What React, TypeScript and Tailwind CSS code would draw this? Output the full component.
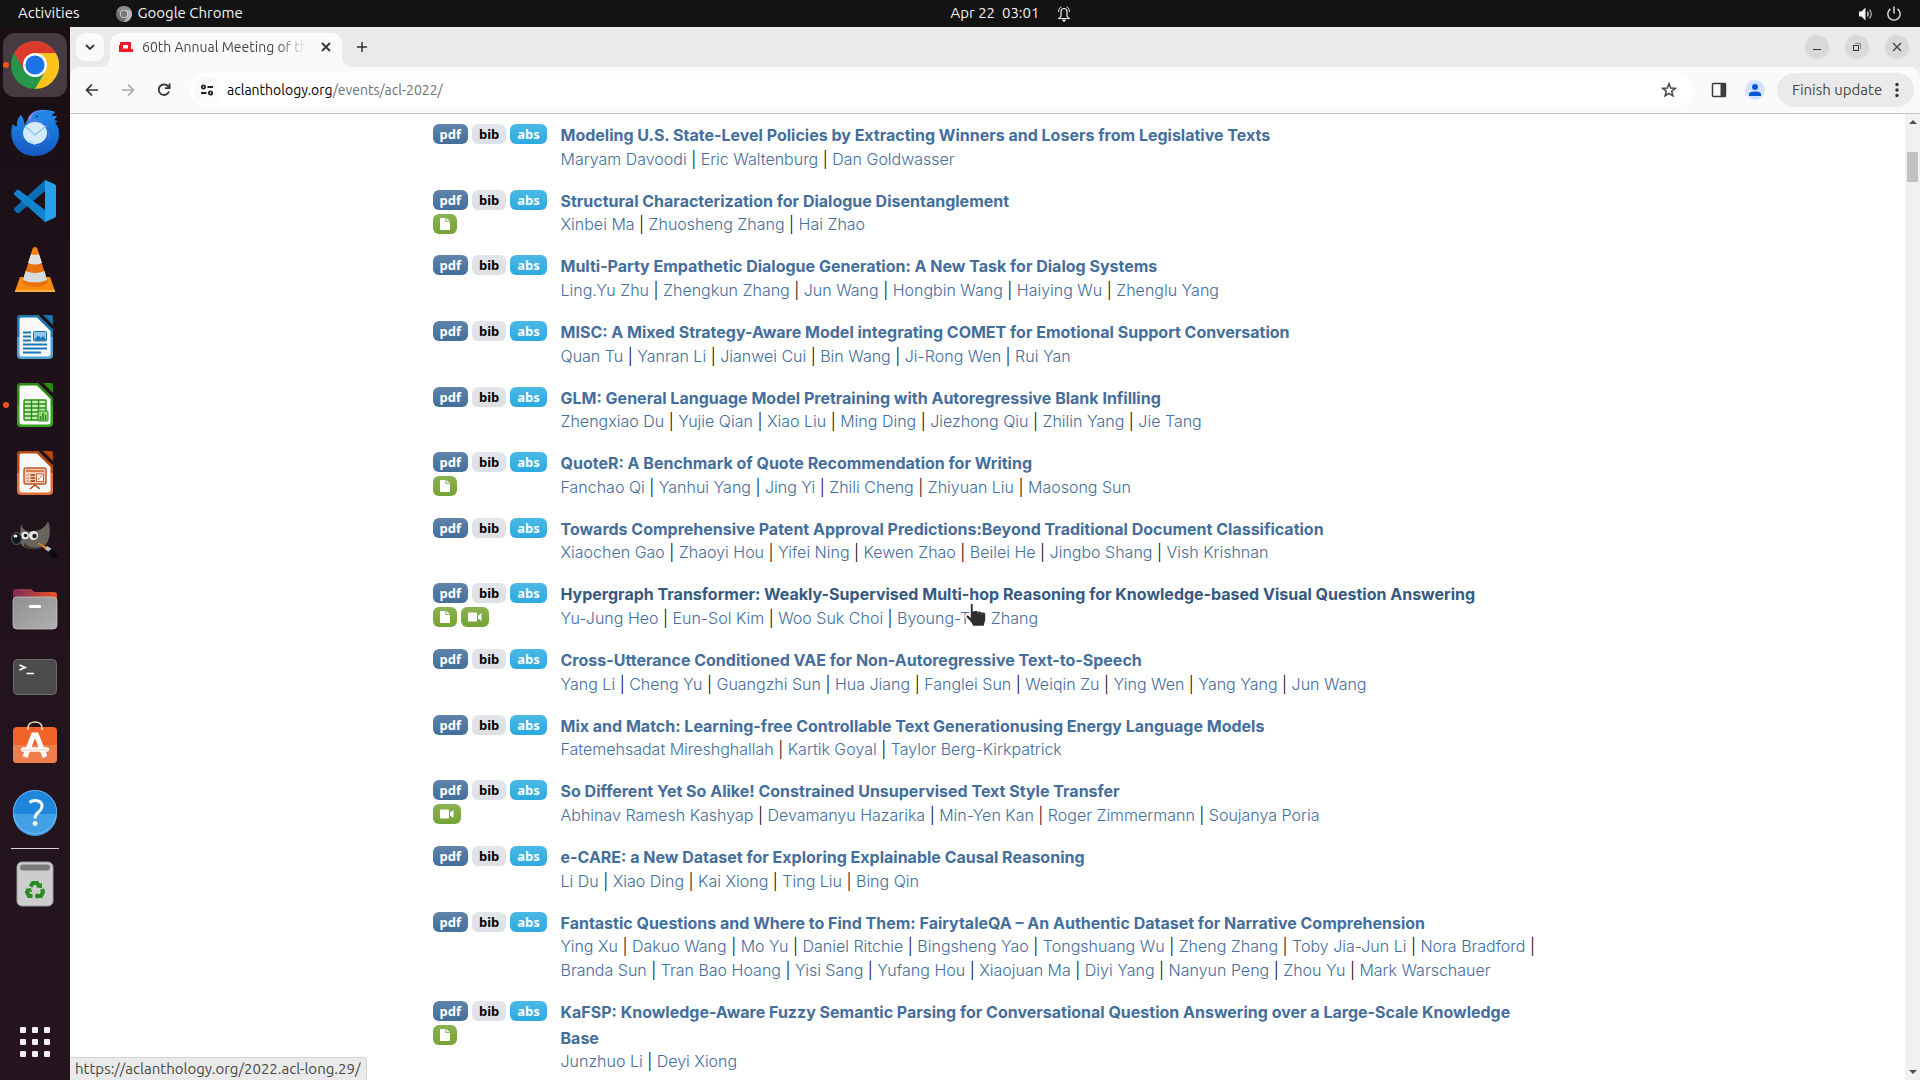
import { Fragment, type ReactNode } from "react";

type Paper = {
  title: string;
  authors: string[];
  extras?: ("file" | "video")[];
  hovered?: boolean;
};

const papers: Paper[] = [
  {
    title: "Modeling U.S. State-Level Policies by Extracting Winners and Losers from Legislative Texts",
    authors: ["Maryam Davoodi", "Eric Waltenburg", "Dan Goldwasser"],
  },
  {
    title: "Structural Characterization for Dialogue Disentanglement",
    authors: ["Xinbei Ma", "Zhuosheng Zhang", "Hai Zhao"],
    extras: ["file"],
  },
  {
    title: "Multi-Party Empathetic Dialogue Generation: A New Task for Dialog Systems",
    authors: ["Ling.Yu Zhu", "Zhengkun Zhang", "Jun Wang", "Hongbin Wang", "Haiying Wu", "Zhenglu Yang"],
  },
  {
    title: "MISC: A Mixed Strategy-Aware Model integrating COMET for Emotional Support Conversation",
    authors: ["Quan Tu", "Yanran Li", "Jianwei Cui", "Bin Wang", "Ji-Rong Wen", "Rui Yan"],
  },
  {
    title: "GLM: General Language Model Pretraining with Autoregressive Blank Infilling",
    authors: ["Zhengxiao Du", "Yujie Qian", "Xiao Liu", "Ming Ding", "Jiezhong Qiu", "Zhilin Yang", "Jie Tang"],
  },
  {
    title: "QuoteR: A Benchmark of Quote Recommendation for Writing",
    authors: ["Fanchao Qi", "Yanhui Yang", "Jing Yi", "Zhili Cheng", "Zhiyuan Liu", "Maosong Sun"],
    extras: ["file"],
  },
  {
    title: "Towards Comprehensive Patent Approval Predictions:Beyond Traditional Document Classification",
    authors: ["Xiaochen Gao", "Zhaoyi Hou", "Yifei Ning", "Kewen Zhao", "Beilei He", "Jingbo Shang", "Vish Krishnan"],
  },
  {
    title: "Hypergraph Transformer: Weakly-Supervised Multi-hop Reasoning for Knowledge-based Visual Question Answering",
    authors: ["Yu-Jung Heo", "Eun-Sol Kim", "Woo Suk Choi", "Byoung-Tak Zhang"],
    extras: ["file", "video"],
    hovered: true,
  },
  {
    title: "Cross-Utterance Conditioned VAE for Non-Autoregressive Text-to-Speech",
    authors: ["Yang Li", "Cheng Yu", "Guangzhi Sun", "Hua Jiang", "Fanglei Sun", "Weiqin Zu", "Ying Wen", "Yang Yang", "Jun Wang"],
  },
  {
    title: "Mix and Match: Learning-free Controllable Text Generationusing Energy Language Models",
    authors: ["Fatemehsadat Mireshghallah", "Kartik Goyal", "Taylor Berg-Kirkpatrick"],
  },
  {
    title: "So Different Yet So Alike! Constrained Unsupervised Text Style Transfer",
    authors: ["Abhinav Ramesh Kashyap", "Devamanyu Hazarika", "Min-Yen Kan", "Roger Zimmermann", "Soujanya Poria"],
    extras: ["video"],
  },
  {
    title: "e-CARE: a New Dataset for Exploring Explainable Causal Reasoning",
    authors: ["Li Du", "Xiao Ding", "Kai Xiong", "Ting Liu", "Bing Qin"],
  },
  {
    title: "Fantastic Questions and Where to Find Them: FairytaleQA – An Authentic Dataset for Narrative Comprehension",
    authors: [
      "Ying Xu", "Dakuo Wang", "Mo Yu", "Daniel Ritchie", "Bingsheng Yao", "Tongshuang Wu", "Zheng Zhang",
      "Toby Jia-Jun Li", "Nora Bradford", "Branda Sun", "Tran Bao Hoang", "Yisi Sang", "Yufang Hou",
      "Xiaojuan Ma", "Diyi Yang", "Nanyun Peng", "Zhou Yu", "Mark Warschauer",
    ],
  },
  {
    title: "KaFSP: Knowledge-Aware Fuzzy Semantic Parsing for Conversational Question Answering over a Large-Scale Knowledge Base",
    authors: ["Junzhuo Li", "Deyi Xiong"],
    extras: ["file"],
  },
];

function ChromeLogo({ mono = false, className }: { mono?: boolean; className: string }) {
  const c = mono
    ? ["#8a8a8a", "#b5b5b5", "#6f6f6f", "#d8d8d8", "#777777"]
    : ["#dd3a2e", "#fcc31e", "#27964a", "#ffffff", "#1a73e8"];
  return (
    <svg viewBox="0 0 48 48" className={className} aria-hidden="true">
      <circle cx="24" cy="24" r="24" fill={c[2]} />
      <path d="M24 24 L3.2 12 A24 24 0 0 1 44.8 12 Z" fill={c[0]} />
      <path d="M24 12 H44.8 A24 24 0 0 1 24 48 L34.4 30 Z" fill={c[1]} />
      <path d="M3.2 12 L13.6 30 L24 24 L24 12 Z" fill={c[0]} />
      <circle cx="24" cy="24" r="12" fill={c[3]} />
      <circle cx="24" cy="24" r="9.6" fill={c[4]} />
    </svg>
  );
}

function DocIcon({ dark, light, children }: { dark: string; light: string; children: ReactNode }) {
  return (
    <svg viewBox="0 0 48 48" className="size-12" aria-hidden="true">
      <path d="M10 2 H27 L42 17 V42 Q42 46 38 46 H10 Q6 46 6 42 V6 Q6 2 10 2 Z" fill={light} />
      <path d="M10 2 H27 L42 17 V24 H6 V6 Q6 2 10 2 Z" fill={dark} />
      <path d="M10 4.5 H26 L39.5 18 V41 Q39.5 43.5 37 43.5 H11 Q8.5 43.5 8.5 41 V6 Q8.5 4.5 10 4.5 Z" fill="#fafafa" />
      <path d="M32 2 H40 Q42 2 42 4 V12 Z" fill={dark} />
      {children}
    </svg>
  );
}

const dock: { name: string; icon: ReactNode; running?: boolean; active?: boolean }[] = [
  { name: "Google Chrome", running: true, active: true, icon: <ChromeLogo className="size-12" /> },
  {
    name: "Thunderbird",
    icon: (
      <svg viewBox="0 0 48 48" className="size-12" aria-hidden="true">
        <defs>
          <linearGradient id="bird" x1="0" y1="0" x2="0" y2="1">
            <stop offset="0" stopColor="#1f8ef0" />
            <stop offset="1" stopColor="#1558c0" />
          </linearGradient>
        </defs>
        <path d="M10 6 C6 9 6 14 6 17 C4 18 3 16 2 15 C-1 22 0 32 5 38 C10 45 17 47 24 47 C37 47 48 38 48 25 C48 20 47 17 44 14 L47 12 L43 11 L46 7 L40 7 L44 3 C36 0 26 0 21 4 C19 6 17 9 16 12 C14 15 12 18 12 21 C15 16 13 10 10 6 Z" fill="url(#bird)" />
        <path d="M17 9 C21 1 32 0 44 3 C34 2 26 4 23 9 C21 13 17 11 17 9Z" fill="#8e83e6" />
        <path d="M22 5 C28 1 36 1 44 3 L40 7 L46 7 L43 11 C36 12 30 12 24 14 C20 12 20 8 22 5Z" fill="#1f86e6" />
        <path d="M15 13 C19 9 25 9 28 12 C33 14 38 19 38 26 C38 32 32 36 27 37 C33 36 37 33 37 27 L36 16Z" fill="#4f7fe2" />
        <ellipse cx="24" cy="24" rx="12" ry="11" fill="#d4ebfd" />
        <path d="M14 17 L24 26 L35 17" fill="none" stroke="#8dc0ee" strokeWidth="1.2" />
        <path d="M17 31 C20 35 25 37 29 37 C24 37 22 34 22 32Z" fill="#b9dcfb" />
        <circle cx="26" cy="7.5" r="1" fill="#0c2e7a" />
      </svg>
    ),
  },
  {
    name: "Visual Studio Code",
    icon: (
      <svg viewBox="0 0 48 48" className="size-12" aria-hidden="true">
        <path d="M34 3 L45 8 V11 L34 14 L8 36 Q7 36.5 6 36 L3 33 Q2.5 32 3.5 31 Z" fill="#0a6cb4" />
        <path d="M34 45 L45 40 V36 L34 33 L8 13 Q7 12.5 6 13 L3 16 Q2.5 17 3.5 18 Z" fill="#1184cd" />
        <path d="M34 3 L43 7 Q45 8 45 10 V38 Q45 40 43 41 L34 45 Z" fill="#27a0ee" />
      </svg>
    ),
  },
  {
    name: "VLC media player",
    icon: (
      <svg viewBox="0 0 48 48" className="size-12" aria-hidden="true">
        <path d="M9 32 H39 L44 46 Q44 47 43 47 H5 Q4 47 4 46 Z" fill="#f78b12" />
        <path d="M4 45 H44 V46 Q44 47 43 47 H5 Q4 47 4 46 Z" fill="#ffb044" />
        <path d="M22 3 Q24 1.5 26 3 L37 38 Q24 46 11 38 Z" fill="#e87109" />
        <path d="M20 9 H28 L31 18 Q24 21 17 18 Z" fill="#dfe3e4" />
        <path d="M14.5 26 Q24 30 33.5 26 L36 35 Q24 40 12 35 Z" fill="#d5dadb" />
        <path d="M22 3 Q24 1.5 26 3 L28 9 Q24 11 20 9 Z" fill="#f28416" />
      </svg>
    ),
  },
  {
    name: "LibreOffice Writer",
    icon: (
      <DocIcon dark="#1b74ae" light="#4ba3d4">
        <path d="M12 19.5 H20 M12 23.5 H20 M12 27.5 H20 M12 31.5 H36 M12 35.5 H36 M12 39.5 H30" stroke="#1279bd" strokeWidth="2" />
        <rect x="22.5" y="18.5" width="13" height="9.5" rx="1" fill="#8fc6e8" stroke="#1b74ae" />
        <path d="M23 27.5 L27 22.5 L30 25 L32.5 23 L35.5 27.5Z" fill="#1b74ae" />
      </DocIcon>
    ),
  },
  {
    name: "LibreOffice Calc",
    running: true,
    icon: (
      <DocIcon dark="#2b8a13" light="#35a61c">
        <rect x="13" y="19" width="22" height="20" rx="1" fill="#c5efb8" stroke="#2b8a13" strokeWidth="1.4" />
        <path d="M13 23 H35 M13 27 H35 M13 31 H35 M13 35 H35 M20.5 19 V39 M27.5 19 V39" stroke="#2b8a13" strokeWidth="1.4" />
        <rect x="27" y="30" width="10" height="10" rx="1" fill="#8fdc78" stroke="#2b8a13" />
        <path d="M29.5 39 V35 M32 39 V32 M34.5 39 V34" stroke="#2b8a13" strokeWidth="1.5" />
      </DocIcon>
    ),
  },
  {
    name: "LibreOffice Impress",
    icon: (
      <DocIcon dark="#b5480c" light="#e0703a">
        <rect x="13" y="19" width="22" height="16" rx="2" fill="#f6cdb5" stroke="#b5562a" strokeWidth="1.4" />
        <path d="M15 22 H33" stroke="#d2622c" strokeWidth="1.6" />
        <path d="M15.5 26 H18 M15.5 29 H18 M15.5 32 H18" stroke="#e79b74" strokeWidth="1.4" />
        <path d="M19.5 26 H24 M19.5 29 H24 M19.5 32 H24" stroke="#8f3a10" strokeWidth="1.4" />
        <rect x="25.5" y="25" width="7" height="7.5" fill="#fff" stroke="#d2622c" />
        <path d="M27 31 L29 28.5 L31.5 26.5" fill="none" stroke="#d2622c" />
        <path d="M24 35 V37 M24 36 L19 40 M24 36 L29 40" stroke="#b5480c" strokeWidth="1.6" />
      </DocIcon>
    ),
  },
  {
    name: "GIMP",
    icon: (
      <svg viewBox="0 0 48 48" className="size-12" aria-hidden="true">
        <path d="M10 7 C12 14 18 16 23 14 C29 14 35 10 37 4 C40 11 39 21 36 26 C31 33 20 33 13 30 C9 28 7 22 9 16 Z" fill="#6a655c" />
        <path d="M13 26 C20 32 30 32 36 26 C32 33 20 33 13 30Z" fill="#3e3a34" />
        <circle cx="14" cy="18.5" r="3.8" fill="#e8e8e8" />
        <circle cx="22.5" cy="18.5" r="4.5" fill="#e8e8e8" />
        <circle cx="14.5" cy="18.5" r="1.8" fill="#1c1c1c" />
        <circle cx="23.5" cy="19" r="2.2" fill="#1c1c1c" />
        <ellipse cx="5.5" cy="21.5" rx="5" ry="6" fill="#10181b" stroke="#58656a" />
        <ellipse cx="4.5" cy="19" rx="2" ry="1.5" fill="#f2f2f2" />
        <path d="M27 26 L37 31 L36 33 Z" fill="#f39a2f" stroke="#d97e14" />
        <path d="M36 29 L41 32 L39 36 L34 32Z" fill="#b9bec0" />
        <path d="M40 32 C45 34 46 38 47 42 C42 41 38 39 37 35Z" fill="#0b0b0b" />
      </svg>
    ),
  },
  {
    name: "Files",
    icon: (
      <svg viewBox="0 0 48 48" className="size-12" aria-hidden="true">
        <defs>
          <linearGradient id="folder" x1="0" y1="0" x2="1" y2="0">
            <stop offset="0" stopColor="#7d2a5c" />
            <stop offset="1" stopColor="#e95420" />
          </linearGradient>
          <linearGradient id="front" x1="0" y1="0" x2="1" y2="1">
            <stop offset="0" stopColor="#8f8f8f" />
            <stop offset="1" stopColor="#b0b0b0" />
          </linearGradient>
        </defs>
        <path d="M5 4 H19 Q21 4 22 6 Q23 7 25 7 H43 Q46 7 46 10 V24 H2 V7 Q2 4 5 4Z" fill="url(#folder)" />
        <rect x="2" y="12" width="44" height="32" rx="4" fill="url(#front)" stroke="#c4c4c4" strokeWidth="0.8" />
        <rect x="18" y="20" width="12" height="3" rx="1" fill="#fff" />
      </svg>
    ),
  },
  {
    name: "Terminal",
    icon: (
      <svg viewBox="0 0 48 48" className="size-12" aria-hidden="true">
        <rect x="2.5" y="6.5" width="43" height="35" rx="4" fill="#4b4b4b" stroke="#6d6d6d" />
        <path d="M8.5 12 L14 14.5 L8.5 17" fill="none" stroke="#fff" strokeWidth="1.8" />
        <path d="M15.5 20.5 H23" stroke="#fff" strokeWidth="1.6" />
      </svg>
    ),
  },
  {
    name: "Ubuntu Software",
    icon: (
      <svg viewBox="0 0 48 48" className="size-12" aria-hidden="true">
        <rect x="2" y="6" width="44" height="36" rx="4" fill="#f0642a" />
        <path d="M2 24 H46 V38 Q46 42 42 42 H6 Q2 42 2 38Z" fill="#f07e4d" />
        <path d="M17 9 V7 C17 -1 31 -1 31 7 V9" fill="none" stroke="#f3ddb4" strokeWidth="1.6" />
        <path d="M14 36 L22.5 14 H25.5 L34 36" fill="none" stroke="#fff" strokeWidth="5" />
        <path d="M12 28.5 H36" stroke="#fff" strokeWidth="4.5" strokeLinecap="round" />
        <path d="M12 29 H36" stroke="#f9c3aa" strokeWidth="1" strokeLinecap="round" />
      </svg>
    ),
  },
  {
    name: "Help",
    icon: (
      <svg viewBox="0 0 48 48" className="size-12" aria-hidden="true">
        <circle cx="24" cy="23" r="22" fill="#1e86dc" />
        <path d="M2 25 H46 A22 22 0 0 1 2 25Z" fill="#43a0e6" />
        <circle cx="24" cy="23" r="21.6" fill="none" stroke="#7cc0f2" strokeWidth="0.8" />
        <path d="M18.5 13.5 C22 10.5 31.5 10.5 31 17.5 C30.5 23 24 23 24 29.5" fill="none" stroke="#fff" strokeWidth="3" />
        <circle cx="24" cy="34.5" r="2.4" fill="#fff" />
      </svg>
    ),
  },
];

function Dock() {
  return (
    <nav aria-label="Dock" className="flex w-[70px] shrink-0 flex-col items-center bg-linear-to-b from-[#1b0f16] to-[#26151f] pt-[6px]">
      <ul className="flex flex-col gap-1">
        {dock.map((d) => (
          <li key={d.name} className="relative">
            <button
              aria-label={d.name}
              className={`flex size-16 items-center justify-center rounded-xl ${d.active ? "bg-[#453b41]" : ""}`}
            >
              {d.icon}
            </button>
            {d.running && <span className="absolute top-[29px] left-0 size-[6px] rounded-full bg-[#e95420]" />}
          </li>
        ))}
      </ul>
      <hr className="my-[3px] w-12 border-[#d6d3d5]" />
      <button aria-label="Trash" className="flex size-16 items-center justify-center">
        <svg viewBox="0 0 48 48" className="size-12" aria-hidden="true">
          <rect x="6" y="2" width="36" height="44" rx="5" fill="#cdcdcd" stroke="#9d9d9d" />
          <rect x="9" y="4.5" width="30" height="6" rx="2.5" fill="#7b7b7b" />
          <g fill="none" stroke="#268c1f" strokeWidth="4">
            <path d="M19.5 26.5 L22 23 H26 L28 26" />
            <path d="M31 29 L32 32 L30 36 H26" />
            <path d="M21.5 36 H18 L16 32 L17.5 29.5" />
          </g>
          <path d="M25 27.5 L31 28 L31 22.5Z M26.5 32.5 L23.5 36 L26.5 39.5Z M14 29 L20 28 L21 32.5Z" fill="#268c1f" />
        </svg>
      </button>
      <button aria-label="Show Applications" className="mt-auto mb-[23px] grid grid-cols-3 gap-[6px]">
        {Array.from({ length: 9 }, (_, i) => (
          <span key={i} className="size-[6px] rounded-[1px] bg-[#f2f0f1]" />
        ))}
      </button>
    </nav>
  );
}

function TopBar() {
  return (
    <header className="flex h-[27px] shrink-0 items-center bg-[#131313] text-[15px] text-[#f2f2f2]">
      <div className="flex flex-1 items-center pl-[18px]">
        <button>Activities</button>
        <button className="ml-9 flex items-center gap-[6px]">
          <ChromeLogo mono className="size-4" />
          Google Chrome
        </button>
      </div>
      <button className="flex items-center gap-[18px] pl-[102px] whitespace-pre">
        Apr 22  03:01
        <svg viewBox="0 0 14 16" className="h-4 w-[14px]" fill="none" stroke="#f2f2f2" aria-hidden="true">
          <path d="M1 12.5 H13 M2.5 12 L4 10 V5.5 C4 1.5 10 1.5 10 5.5 V10 L11.5 12" strokeWidth="1.2" />
          <path d="M1.5 6 C1.5 3.5 2.5 1.5 4.5 0.8 M12.5 6 C12.5 3.5 11.5 1.5 9.5 0.8" />
          <path d="M5.5 14 H8.5 L7 15.5Z" fill="#f2f2f2" />
        </svg>
      </button>
      <div className="flex flex-1 items-center justify-end gap-3 pr-[18px]">
        <button aria-label="Volume">
          <svg viewBox="0 0 16 16" className="size-4" fill="none" stroke="#f2f2f2" aria-hidden="true">
            <path d="M1 5.5 H3.5 L7.5 1.5 V14.5 L3.5 10.5 H1Z" fill="#f2f2f2" stroke="none" />
            <path d="M9.5 5.5 Q11 8 9.5 10.5" strokeWidth="1.3" />
            <path d="M11.5 3.5 Q15 8 11.5 12.5" stroke="#aaa" strokeWidth="1.3" />
          </svg>
        </button>
        <button aria-label="Power">
          <svg viewBox="0 0 16 16" className="size-4" fill="none" stroke="#e4e4e4" strokeWidth="1.4" aria-hidden="true">
            <path d="M4.5 2.8 A6.2 6.2 0 1 0 11.5 2.8 M8 0.5 V7.5" />
          </svg>
        </button>
      </div>
    </header>
  );
}

function TabStrip() {
  return (
    <div className="flex h-10 items-center bg-[#eaeaea] pr-[11px] pl-[6px]">
      <button aria-label="Search tabs" className="flex size-7 items-center justify-center rounded-[9px] bg-[#fafafa]">
        <svg viewBox="0 0 10 6" className="h-[6px] w-[10px]" fill="none" stroke="#333" strokeWidth="1.8" aria-hidden="true">
          <path d="M1 1 L5 5 L9 1" />
        </svg>
      </button>
      <div className="relative ml-[6px] flex h-[34px] w-[232px] items-center self-end rounded-t-[10px] bg-[#fafafa] pl-[9px] before:absolute before:bottom-0 before:-left-[10px] before:size-[10px] before:bg-[radial-gradient(circle_at_0_0,transparent_10px,#fafafa_10px)] after:absolute after:-right-[10px] after:bottom-0 after:size-[10px] after:bg-[radial-gradient(circle_at_100%_0,transparent_10px,#fafafa_10px)]">
        <svg viewBox="0 0 14 10" className="mb-[6px] h-[10px] w-[14px]" aria-hidden="true">
          <path d="M1 0 H12 V7 H14 V10 H0 V3 H1Z M4 3 V6.5 H9 V3Z" fill="#ed1c24" fillRule="evenodd" />
        </svg>
        <span className="mb-[6px] ml-[9px] w-[168px] overflow-hidden bg-linear-to-r from-[#3c4043] from-80% to-transparent to-98% bg-clip-text text-[14px] whitespace-nowrap text-transparent">
          60th Annual Meeting of the
        </span>
        <button aria-label="Close tab" className="mb-[6px] ml-[11px]">
          <svg viewBox="0 0 10 10" className="size-[10px]" stroke="#333" strokeWidth="1.8" aria-hidden="true">
            <path d="M1 1 L9 9 M9 1 L1 9" />
          </svg>
        </button>
      </div>
      <button aria-label="New tab" className="ml-[15px]">
        <svg viewBox="0 0 10 10" className="size-[10px]" stroke="#333" strokeWidth="1.5" aria-hidden="true">
          <path d="M5 0 V10 M0 5 H10" />
        </svg>
      </button>
      <div className="ml-auto flex gap-4">
        <button aria-label="Minimize" className="flex size-6 items-center justify-center rounded-full bg-[#d9d9d9]">
          <svg viewBox="0 0 10 10" className="size-[10px]" aria-hidden="true">
            <path d="M1 7.5 H9" stroke="#333" />
          </svg>
        </button>
        <button aria-label="Restore" className="flex size-6 items-center justify-center rounded-full bg-[#d9d9d9]">
          <svg viewBox="0 0 10 10" className="size-[10px]" fill="none" aria-hidden="true">
            <path d="M3 1.5 H8.5 V7" stroke="#888" />
            <rect x="1.5" y="3.5" width="5" height="5" stroke="#333" />
          </svg>
        </button>
        <button aria-label="Close" className="flex size-6 items-center justify-center rounded-full bg-[#d9d9d9]">
          <svg viewBox="0 0 10 10" className="size-[10px]" stroke="#444" strokeWidth="1.4" aria-hidden="true">
            <path d="M1 1 L9 9 M9 1 L1 9" />
          </svg>
        </button>
      </div>
    </div>
  );
}

function Toolbar() {
  return (
    <div className="bg-[#eaeaea]">
      <div className="flex h-[47px] items-center rounded-t-[10px] border-b border-[#c4c4c4] bg-[#fafafa] pr-[6px] pl-1">
        <button aria-label="Back" className="flex size-9 items-center justify-center">
          <svg viewBox="0 0 14 14" className="size-[14px]" fill="none" stroke="#333" strokeWidth="1.7" aria-hidden="true">
            <path d="M13 7 H2 M7 1.5 L1.5 7 L7 12.5" />
          </svg>
        </button>
        <button aria-label="Forward" className="flex size-9 items-center justify-center">
          <svg viewBox="0 0 14 14" className="size-[14px]" fill="none" stroke="#aaa" strokeWidth="1.7" aria-hidden="true">
            <path d="M1 7 H12 M7 1.5 L12.5 7 L7 12.5" />
          </svg>
        </button>
        <button aria-label="Reload" className="flex size-9 items-center justify-center">
          <svg viewBox="0 0 14 14" className="size-[14px]" fill="none" stroke="#333" strokeWidth="1.8" aria-hidden="true">
            <path d="M12 8.5 A5.3 5.3 0 1 1 11 3.2 L12.5 5" />
            <path d="M12.6 0.5 V5.2 H8" />
          </svg>
        </button>
        <div className="ml-2 flex h-[34px] flex-1 items-center rounded-full bg-white pr-4 pl-[3px]">
          <button aria-label="View site information" className="flex size-7 items-center justify-center rounded-full bg-[#fafafa]">
            <svg viewBox="0 0 14 12" className="h-3 w-[14px]" fill="none" stroke="#222" strokeWidth="1.8" aria-hidden="true">
              <circle cx="3.5" cy="3" r="1.7" />
              <path d="M7.5 3 H13 M1 9 H6.5" />
              <circle cx="10.5" cy="9" r="1.7" />
            </svg>
          </button>
          <a href="#address" className="ml-[6px] flex-1 text-[14px] text-[#6f6f6f]">
            <span className="text-black">aclanthology.org</span>/events/acl-2022/
          </a>
          <button aria-label="Bookmark this tab">
            <svg viewBox="0 0 16 16" className="size-4" fill="none" stroke="#444" strokeWidth="1.5" aria-hidden="true">
              <path d="M8 1.7 L9.7 6 L14.3 6.3 L10.7 9.2 L11.9 13.8 L8 11.3 L4.1 13.8 L5.3 9.2 L1.7 6.3 L6.3 6Z" />
            </svg>
          </button>
        </div>
        <button aria-label="Side panel" className="ml-2 flex size-9 items-center justify-center">
          <svg viewBox="0 0 16 16" className="size-4" aria-hidden="true">
            <rect x="1.5" y="1.5" width="13" height="13" rx="1" fill="none" stroke="#3c3c3c" strokeWidth="1.5" />
            <path d="M9.5 1 H15 V15 H9.5Z" fill="#3c3c3c" />
          </svg>
        </button>
        <button aria-label="Profile" className="flex size-9 items-center justify-center">
          <svg viewBox="0 0 20 20" className="size-5" aria-hidden="true">
            <circle cx="10" cy="10" r="10" fill="#d3e3fd" />
            <circle cx="10" cy="7" r="3" fill="#0b57d0" />
            <path d="M4 16 V14 C4 10.7 16 10.7 16 14 V16Z" fill="#0b57d0" />
          </svg>
        </button>
        <button className="ml-1 flex h-[34px] w-[137px] items-center rounded-full bg-[#eaeaea] pl-[15px] text-[15px] text-[#474747]">
          Finish update
          <svg viewBox="0 0 4 16" className="mr-[15px] ml-auto h-4 w-1" fill="#333" aria-hidden="true">
            <circle cx="2" cy="2.5" r="1.7" />
            <circle cx="2" cy="8" r="1.7" />
            <circle cx="2" cy="13.5" r="1.7" />
          </svg>
        </button>
      </div>
    </div>
  );
}

function PaperRow({ paper }: { paper: Paper }) {
  return (
    <p className="mb-4 flex">
      <span className="mr-2 block min-w-[120px] shrink-0 pt-[3px] font-['Noto_Sans',sans-serif] text-[13px] font-bold whitespace-nowrap">
        <span className="flex h-6 items-start gap-1">
          <a href="#pdf" className="rounded-[6px] bg-linear-to-b from-[#6084aa] to-[#446e9b] px-[7px] leading-5 text-white">pdf</a>
          <a href="#bib" className="rounded-[6px] bg-linear-to-b from-[#e2e5e9] to-[#dde1e6] px-[7px] leading-5 text-black">bib</a>
          <a href="#abs" className="rounded-[6px] bg-linear-to-b from-[#4bb9e4] to-[#2ca9df] px-[7px] leading-5 text-white">abs</a>
        </span>
        {paper.extras && (
          <span className="flex h-5 items-start gap-1">
            {paper.extras.map((kind) => (
              <a
                key={kind}
                href={`#${kind}`}
                aria-label={kind}
                className="flex h-5 items-center rounded-[6px] bg-linear-to-b from-[#8bb352] to-[#75a333] px-[7px]"
              >
                {kind === "file" ? (
                  <svg viewBox="0 0 10 14" className="h-[14px] w-[10px]" aria-hidden="true">
                    <path d="M0 1 H5.5 V5 H10 V13 H0Z M6.5 1 L10 4.2 H6.5Z" fill="#fff" />
                  </svg>
                ) : (
                  <svg viewBox="0 0 14 12" className="h-3 w-[14px]" aria-hidden="true">
                    <path d="M1 1.5 H8 Q9 1.5 9 2.5 V9.5 Q9 10.5 8 10.5 H1 Q0 10.5 0 9.5 V2.5 Q0 1.5 1 1.5Z M10 4.5 L13.5 2 V10 L10 7.5Z" fill="#fff" />
                  </svg>
                )}
              </a>
            ))}
          </span>
        )}
      </span>
      <span className="block font-[350]">
        <strong className="font-[650]">
          <a href="#paper" className={`align-middle ${paper.hovered ? "text-[#36597f]" : "text-[#446e9b]"}`}>
            {paper.title}
          </a>
        </strong>
        <br />
        {paper.authors.map((a, i) => (
          <Fragment key={a}>
            {i > 0 && "\u00a0| "}
            <a href="#author" className="text-[#446e9b]">{a}</a>
          </Fragment>
        ))}
      </span>
    </p>
  );
}

export default function App() {
  return (
    <div className="relative flex h-screen flex-col overflow-hidden bg-white font-[Ubuntu,'Noto_Sans',sans-serif]">
      <TopBar />
      <div className="flex min-h-0 flex-1">
        <Dock />
        <div className="flex min-w-0 flex-1 flex-col">
          <TabStrip />
          <Toolbar />
          <div className="relative flex min-h-0 flex-1">
            <main className="min-w-0 flex-1 overflow-hidden pt-[7px] font-[Inter,sans-serif] text-[16px] leading-6 text-black">
              <div className="mx-auto max-w-[1140px] px-[15px]">
                {papers.map((p) => (
                  <PaperRow key={p.title} paper={p} />
                ))}
              </div>
            </main>
            <div className="flex w-[15px] shrink-0 flex-col items-center bg-[#f1f1f1]">
              <svg viewBox="0 0 8 4" className="mt-[6px] h-1 w-2" aria-hidden="true">
                <path d="M0 4 L4 0 L8 4Z" fill="#505050" />
              </svg>
              <div className="mt-[28px] h-[30px] w-[11px] bg-[#c1c1c1]" />
              <svg viewBox="0 0 8 4" className="mt-auto mb-[6px] h-1 w-2" aria-hidden="true">
                <path d="M0 0 L4 4 L8 0Z" fill="#505050" />
              </svg>
            </div>
            <div className="absolute bottom-0 left-0 h-[23px] rounded-tr-[4px] border-t border-r border-[#d5d5d5] bg-[#eaeaea] pr-[6px] pl-[5px] text-[15px] leading-[22px] text-[#474747]">
              https://aclanthology.org/2022.acl-long.29/
            </div>
          </div>
        </div>
      </div>
      {/* hand pointer over the hovered title */}
      <svg viewBox="0 0 24 26" className="pointer-events-none absolute top-[602px] left-[964px] h-[26px] w-6" aria-hidden="true">
        <path
          d="M6 2.5 C6 0.3 9.5 0.3 9.5 2.5 V8.5 L11 8.2 C12 7.8 13.5 8.2 14 9 C15.5 8.3 17 8.6 17.7 9.8 C20 9.3 22 10 22 12 V17.5 C22 20 20.5 21.5 20.5 24.5 H8.5 C8 21.5 5 19 2 15.5 C0.8 13.5 3 11.8 4.7 13 L6 14.2Z"
          fill="#2e2e2e"
          stroke="#fff"
          strokeWidth="1.6"
        />
        <path d="M14 9.5 V12 M17.7 10.3 V12.5" stroke="#777" strokeWidth="0.8" />
      </svg>
    </div>
  );
}
